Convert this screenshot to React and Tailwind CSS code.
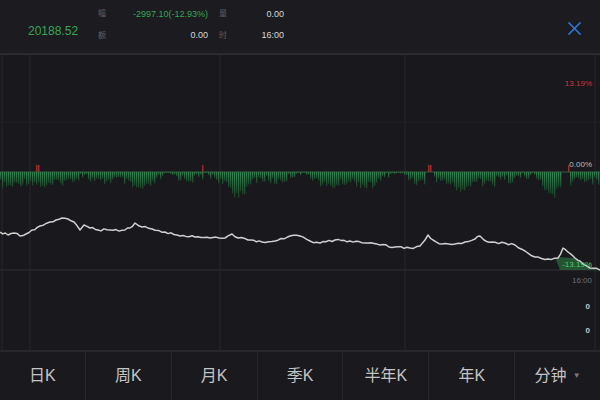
import React from 'react';

// price line points [x, y] in page coordinates
const PRICE = [
  [0, 232], [8, 235], [14, 233], [20, 236], [26, 234], [32, 230], [40, 226], [50, 222], [56, 220],
  [62, 218], [68, 219], [74, 222], [80, 230], [84, 225], [90, 228], [98, 230], [110, 230], [125, 230],
  [130, 228], [135, 223], [142, 227], [152, 229], [165, 232], [180, 236], [195, 237], [210, 238],
  [225, 238], [232, 234], [238, 238], [248, 240], [262, 242], [275, 241], [290, 236], [300, 236],
  [310, 241], [320, 243], [335, 240], [350, 241], [365, 243], [380, 245], [395, 247], [410, 248],
  [420, 246], [425, 240], [428, 235], [433, 240], [442, 244], [455, 244], [465, 242], [475, 239],
  [480, 236], [484, 240], [492, 242], [505, 243], [515, 245], [525, 251], [535, 257], [548, 259],
  [558, 258], [563, 248], [568, 252], [575, 258], [583, 264], [590, 268], [600, 270],
];

function noise(i) {
  const s = Math.sin(i * 12.9898) * 43758.5453;
  return s - Math.floor(s);
}

// densify with small jitter so the line looks like tick data
const DENSE = [];
for (let k = 0; k < PRICE.length - 1; k++) {
  const [x0, y0] = PRICE[k];
  const [x1, y1] = PRICE[k + 1];
  const steps = Math.max(1, Math.round((x1 - x0) / 3));
  for (let s = 0; s < steps; s++) {
    const t = s / steps;
    const j = s === 0 ? 0 : (noise(k * 31 + s) - 0.5) * 2.2;
    DENSE.push([x0 + (x1 - x0) * t, y0 + (y1 - y0) * t + j]);
  }
}
DENSE.push(PRICE[PRICE.length - 1]);

const pricePath = DENSE.map((p, i) => `${i ? 'L' : 'M'}${p[0].toFixed(1)} ${(p[1] - 55).toFixed(1)}`).join(' ');

// histogram depth below zero line
const BARS = Array.from({ length: 300 }, (_, i) => {
  const x = i * 2;
  const base = 7 + 5 * Math.sin(x / 17) + 4 * Math.sin(x / 7.3 + 1) + (noise(i) - 0.3) * 8;
  let d = Math.max(1, base);
  if (x > 60 && x < 80) d += 6;
  if (x > 230 && x < 250) d += 5;
  if (x > 480 && x < 495) d += 8;
  if (x > 540 && x < 556) d += 6;
  if ((x > 425 && x < 433) || (x > 560 && x < 570)) d = 0;
  return { x, d };
});

const RED = [36, 38, 202, 428, 430, 568];

const Chart = () => (
  <svg width="600" height="295" className="absolute inset-0">
    <defs>
      <linearGradient id="g" x1="0" y1="0" x2="0" y2="1">
        <stop offset="0" stopColor="#3a8a57" />
        <stop offset="1" stopColor="#1b3f28" />
      </linearGradient>
    </defs>
    {/* grid */}
    {[2, 30, 220, 405, 595].map((x) => (
      <line key={x} x1={x} y1="0" x2={x} y2="295" stroke="#222228" strokeWidth="1.5" />
    ))}
    <line x1="0" y1="67" x2="600" y2="67" stroke="#1f1f25" />
    <line x1="0" y1="215" x2="600" y2="215" stroke="#27272e" strokeWidth="1.5" />
    {/* histogram */}
    {BARS.map((b) => (
      <rect key={b.x} x={b.x} y="117" width="1.3" height={b.d} fill="url(#g)" />
    ))}
    {RED.map((x) => (
      <rect key={x} x={x} y="110" width="1.5" height="7" fill="#9c2a33" />
    ))}
    <line x1="0" y1="117" x2="600" y2="117" stroke="#33603f" strokeWidth="1" />
    <path d="M555 202 L575 203 L590 213 L600 215 L560 215 Z" fill="#2a6e3d" opacity="0.7" />
    <path d={pricePath} fill="none" stroke="#cfcfcf" strokeWidth="1.5" strokeLinejoin="round" />
  </svg>
);

const TABS = ['日K', '周K', '月K', '季K', '半年K', '年K'];

export default function App() {
  return (
    <div
      className="w-[600px] h-[400px] bg-[#18181d] flex flex-col overflow-hidden"
      style={{ fontFamily: '"Liberation Sans", "Noto Sans CJK SC", sans-serif' }}
    >
      {/* header */}
      <div className="h-[55px] shrink-0 bg-[#1b1b20] border-b-[2px] border-[#2a2a31] flex items-center relative">
        <div className="w-[98px] pl-[28px] pt-[8px] text-[12px] text-[#3aa557]">20188.52</div>
        <div className="grid grid-cols-[16px_94px_16px_60px] grid-rows-2 gap-y-[8px] text-[9px] text-[#d8d8d8] items-center pb-[3px]">
          <span className="text-[#5e5e64] text-[8px]">幅</span>
          <span className="text-right text-[#3aa557]">-2997.10(-12.93%)</span>
          <span className="text-[#5e5e64] text-[8px] pl-[11px] w-[28px]">量</span>
          <span className="text-right">0.00</span>
          <span className="text-[#5e5e64] text-[8px]">额</span>
          <span className="text-right">0.00</span>
          <span className="text-[#5e5e64] text-[8px] pl-[11px] w-[28px]">时</span>
          <span className="text-right">16:00</span>
        </div>
        <div className="ml-auto mr-[19px] pt-[4px]">
          <svg width="13" height="13" viewBox="0 0 14 14">
            <path d="M1 1 L13 13 M13 1 L1 13" stroke="#2e72cc" strokeWidth="1.7" strokeLinecap="round" />
          </svg>
        </div>
      </div>

      {/* chart */}
      <div className="relative flex-1 text-[8px]">
        <Chart />
        <span className="absolute right-[8px] top-[23px] text-[#d2343f]">13.19%</span>
        <span className="absolute right-[8px] top-[104px] text-[#bdbdbd]">0.00%</span>
        <span className="absolute right-[8px] top-[204px] text-[#4fcf6f]">-13.19%</span>
        <span className="absolute right-[8px] top-[220px] text-[#707076]">16:00</span>
        <span className="absolute right-[10px] top-[246px] text-[#c8c8c8] font-bold">0</span>
        <span className="absolute right-[10px] top-[270px] text-[#c8c8c8] font-bold">0</span>
      </div>

      {/* tabs */}
      <div className="h-[50px] shrink-0 border-t-[2px] border-[#27272e] flex bg-[#19191e]">
        {TABS.map((t) => (
          <div
            key={t}
            className="flex-1 flex items-center justify-center border-r border-[#27272e] text-[16px] text-[#c4c4c4]"
          >
            {t}
          </div>
        ))}
        <div className="flex-1 flex items-center justify-center gap-[6px] text-[16px] text-[#c4c4c4]">
          分钟
          <span className="text-[8px] text-[#7a7a80]">▼</span>
        </div>
      </div>
    </div>
  );
}
